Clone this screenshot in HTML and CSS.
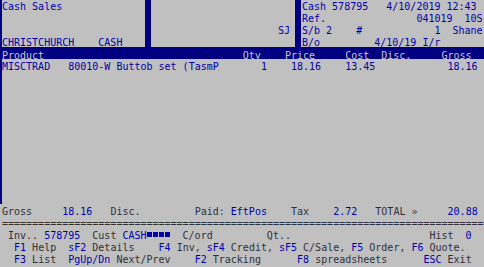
FILE: index.html
```html
<!DOCTYPE html>
<html>
<head>
<meta charset="utf-8">
<link rel="stylesheet" href="styles.css">
</head>
<body>
<div class="screen">
  <div class="main">
    <div class="top">
      <div class="panel left"><div class="ln">Cash Sales</div><div class="ln"> </div><div class="ln"> </div><div class="ln">CHRISTCHURCH    CASH</div></div>
      <div class="vbar"></div>
      <div class="panel mid"><div class="ln"> </div><div class="ln"> </div><div class="ln">SJ</div><div class="ln"> </div></div>
      <div class="vbar"></div>
      <div class="panel right"><div class="ln">Cash 578795   4/10/2019 12:43</div><div class="ln">Ref.               041019  10S</div><div class="ln">S/b 2    #            1  Shane</div><div class="ln">B/o         4/10/19 I/r</div></div>
    </div>
    <div class="hdr ln">Product                                 Qty    Price     Cost  Disc.     Gross</div>
    <div class="ln blue">MISCTRAD   80010-W Buttob set (TasmP       1    18.16    13.45            18.16</div>
  </div>
  <div class="foot">
    <div class="ln">Gross     <b>18.16</b>   Disc.         Paid: <b>EftPos</b>    Tax    <b>2.72</b>   TOTAL »     <b>20.88</b></div>
    <div class="ln">================================================================================</div>
    <div class="ln"> Inv.. <b>578795</b>  Cust <b>CASH<span class="blk"></span><span class="blk"></span><span class="blk"></span><span class="blk"></span></b>  C/ord         Qt..                       Hist  <b>0</b></div>
    <div class="ln">  <b>F1</b> Help  <b>sF2</b> Details    <b>F4</b> Inv, <b>sF4</b> Credit, <b>sF5</b> C/Sale, <b>F5</b> Order, <b>F6</b> Quote.</div>
    <div class="ln">  <b>F3</b> List  <b>PgUp/Dn</b> Next/Prev    <b>F2</b> Tracking      <b>F8</b> spreadsheets      <b>ESC</b> Exit</div>
  </div>
</div>
</body>
</html>
```

FILE: styles.css
```css
html, body {
  margin: 0;
  padding: 0;
  background: #c0c0c0;
}
.screen {
  width: 484px;
  height: 267px;
  overflow: hidden;
  font-family: "DejaVu Sans Mono", monospace;
  font-size: 10px;
  line-height: 12px;
  color: #0000a8;
}
.ln {
  white-space: pre;
  height: 12px;
  box-sizing: border-box;
  padding-top: 2px;
  line-height: 11px;
}
.main {
  border-left: 2px solid #000080;
  height: 204px;
}
.top {
  display: flex;
  height: 47px;
}
.panel {
  overflow: hidden;
}
.panel .ln {
  padding-top: 1px;
}
.left {
  width: 143px;
}
.vbar {
  width: 6px;
  background: #000080;
}
.mid {
  width: 144px;
  text-align: right;
  padding-right: 5px;
  box-sizing: border-box;
}
.right {
  flex: 1;
  padding-left: 1px;
}
.hdr {
  background: #000080;
  color: #c8c8c8;
  margin-left: -2px;
  padding-left: 2px;
  padding-top: 3px;
}
.blue {
  color: #0000a8;
}
.foot {
  padding-left: 2px;
  color: #303038;
}
.foot .ln {
  padding-top: 1.5px;
}
.foot b {
  font-weight: normal;
  color: #0000a8;
}
.blk {
  display: inline-block;
  width: 5px;
  height: 5px;
  margin: 0 1px 2px 0;
  background: #0000a8;
  vertical-align: baseline;
}
```
